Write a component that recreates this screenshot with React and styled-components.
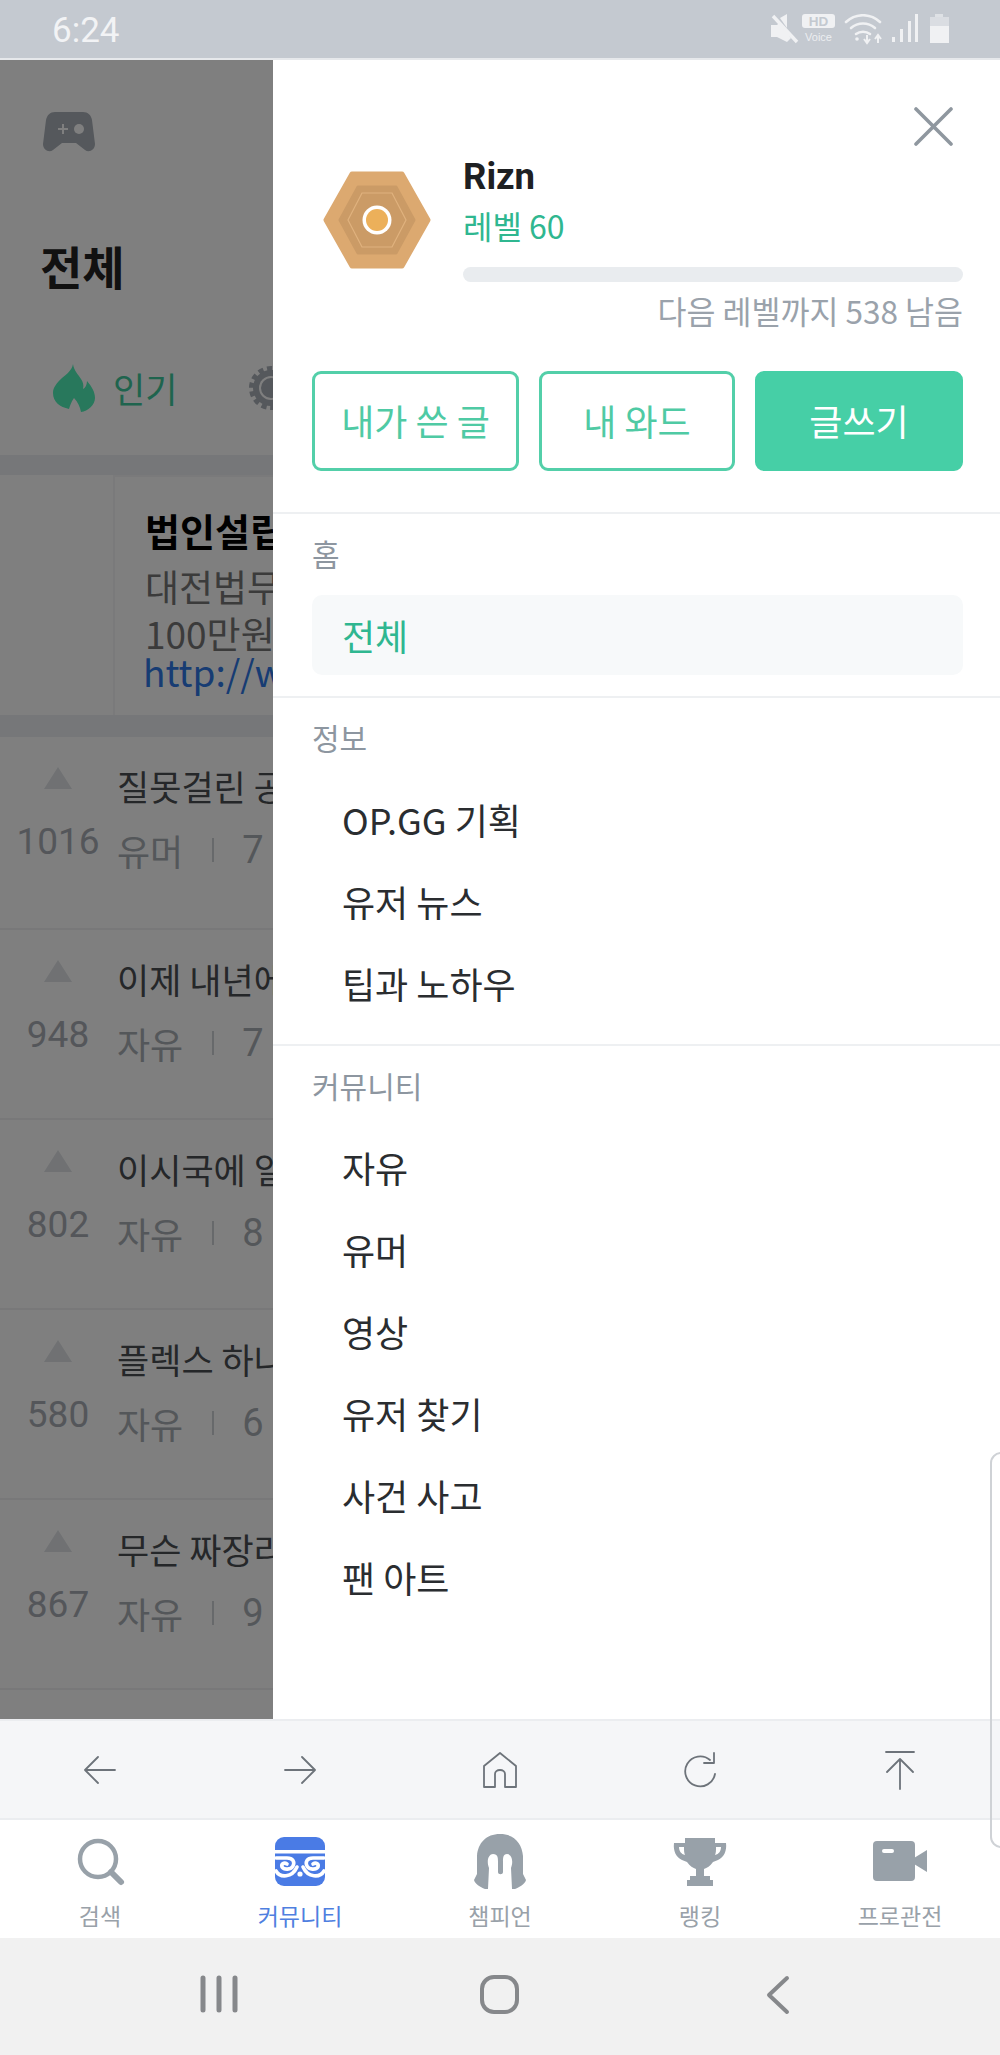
import React from "react";
import styled, { createGlobalStyle } from "styled-components";

const Global = createGlobalStyle`
  html, body { margin: 0; padding: 0; background: #fff; }
  * { box-sizing: border-box; }
  body { font-family: "Noto Sans CJK KR", "Noto Sans", sans-serif; }
`;

const Screen = styled.div`
  position: relative;
  width: 1000px;
  height: 2055px;
  display: flex;
  flex-direction: column;
  overflow: hidden;
`;

const StatusBar = styled.div`
  height: 60px;
  flex: none;
  background: #c4c9d0;
  border-bottom: 2px solid #e6e8eb;
  display: flex;
  align-items: center;
  justify-content: space-between;
  padding: 3px 50px 0 52px;
`;
const Clock = styled.span`
  font-family: Roboto, sans-serif;
  font-size: 35px;
  color: #f2f3f5;
  line-height: 1;
`;
const StatusIcons = styled.svg`
  width: 180px;
  height: 34px;
  display: block;
`;

const Main = styled.div`
  height: 1659px;
  flex: none;
  display: flex;
  overflow: hidden;
`;

const Page = styled.div`
  position: relative;
  width: 273px;
  flex: none;
  overflow: hidden;
  background: #fff;
`;
const Backdrop = styled.div`
  position: absolute;
  inset: 0;
  background: rgba(0, 0, 0, 0.5);
`;
const PageHead = styled.div`
  height: 395px;
  padding: 52px 0 0 43px;
`;
const GameIcon = styled.svg`
  display: block;
  width: 52px;
  height: 40px;
`;
const PageTitle = styled.h1`
  margin: 80px 0 0 -3px;
  font-size: 46px;
  line-height: 66px;
  font-weight: 700;
  color: #222;
`;
const Tabs = styled.div`
  margin: 66px 0 0 10px;
  display: flex;
  align-items: center;
  white-space: nowrap;
`;
const Flame = styled.svg`
  width: 42px;
  height: 48px;
  flex: none;
`;
const TabLabel = styled.span`
  margin-left: 18px;
  font-size: 35px;
  line-height: 48px;
  color: #3ec99c;
`;
const Gear = styled.svg`
  width: 46px;
  height: 46px;
  flex: none;
  margin-left: 71px;
`;
const Band = styled.div`
  height: ${(p) => p.$h}px;
  background: #edeff2;
`;
const Ad = styled.div`
  height: 240px;
  margin-left: 113px;
  padding: 29px 0 0 30px;
  border-left: 2px solid #f4f5f6;
  border-top: 2px solid #f4f5f6;
  white-space: nowrap;
  background: #fff;
`;
const AdTitle = styled.div`
  font-size: 38px;
  line-height: 48px;
  font-weight: 700;
  color: #000;
`;
const AdLine = styled.div`
  font-size: 37px;
  line-height: 47px;
  margin-top: 9px;
  color: #777;
  & + & { margin-top: 0; }
`;
const AdLink = styled.div`
  margin-left: -2px;
  font-size: 37px;
  line-height: 28px;
  color: #2f78e6;
`;
const Row = styled.div`
  height: ${(p) => (p.$first ? 193 : 190)}px;
  display: flex;
  border-bottom: 2px solid #f0f1f3;
`;
const Vote = styled.div`
  width: 117px;
  flex: none;
  display: flex;
  flex-direction: column;
  align-items: center;
  padding: 30px 1px 0 0;
`;
const Tri = styled.div`
  width: 0;
  height: 0;
  border-left: 14px solid transparent;
  border-right: 14px solid transparent;
  border-bottom: 22px solid #e0e3e7;
`;
const Votes = styled.div`
  margin-top: 31px;
  font-family: Roboto, sans-serif;
  font-size: 37px;
  line-height: 44px;
  color: #a8adb4;
`;
const RowBody = styled.div`
  flex: 1;
  min-width: 0;
  padding-top: 27px;
  white-space: nowrap;
`;
const RowTitle = styled.div`
  font-size: 35px;
  line-height: 44px;
  color: #4a4e53;
`;
const Meta = styled.div`
  margin-top: 20px;
  display: flex;
  align-items: center;
  font-size: 36px;
  line-height: 44px;
  color: #a9aeb4;
`;
const MetaSep = styled.span`
  width: 2px;
  height: 24px;
  margin: 0 28px 0 29px;
  background: #cfd2d6;
  flex: none;
`;
const MetaNum = styled.span`
  font-family: Roboto, sans-serif;
  font-size: 38px;
`;

const Drawer = styled.aside`
  position: relative;
  flex: 1;
  min-width: 0;
  background: #fff;
`;
const Close = styled.svg`
  position: absolute;
  top: 47px;
  right: 47px;
  width: 39px;
  height: 39px;
`;
const Profile = styled.div`
  padding: 96px 37px 41px 39px;
  border-bottom: 2px solid #eef0f2;
`;
const ProfileTop = styled.div`
  display: flex;
`;
const Avatar = styled.svg`
  width: 108px;
  height: 98px;
  flex: none;
  margin: 15px 0 0 11px;
`;
const ProfileInfo = styled.div`
  flex: 1;
  margin-left: 32px;
  min-width: 0;
`;
const Name = styled.div`
  font-family: Roboto, sans-serif;
  font-size: 36.5px;
  line-height: 42px;
  font-weight: 700;
  color: #1e2022;
`;
const Level = styled.div`
  margin-top: 7px;
  font-size: 32px;
  line-height: 40px;
  color: #2fb790;
`;
const Bar = styled.div`
  margin-top: 22px;
  height: 15px;
  border-radius: 8px;
  background: #e9ecef;
`;
const NextLevel = styled.div`
  margin-top: 8px;
  text-align: right;
  font-size: 31.5px;
  line-height: 40px;
  color: #9aa2ab;
`;
const Actions = styled.div`
  margin-top: 41px;
  display: grid;
  grid-template-columns: 207px 196px 208px;
  justify-content: space-between;
`;
const Action = styled.div`
  height: 100px;
  border-radius: 9px;
  border: 3px solid #53cfa9;
  display: flex;
  align-items: center;
  justify-content: center;
  padding-bottom: 2px;
  font-size: 36px;
  white-space: nowrap;
  color: ${(p) => (p.$solid ? "#fff" : "#4fcaa4")};
  background: ${(p) => (p.$solid ? "#46cfa6" : "#fff")};
  border-color: ${(p) => (p.$solid ? "#46cfa6" : "#53cfa9")};
`;
const Section = styled.section`
  padding: 19px 37px 21px 39px;
  border-bottom: ${(p) => (p.$last ? "none" : "2px solid #eef0f2")};
`;
const SectionTitle = styled.div`
  font-size: 30px;
  line-height: 40px;
  color: #8d96a0;
`;
const List = styled.div`
  margin-top: 22px;
  display: flex;
  flex-direction: column;
  gap: 2px;
`;
const Item = styled.div`
  height: 80px;
  padding-left: 30px;
  display: flex;
  align-items: center;
  font-size: 36px;
  border-radius: 10px;
  color: ${(p) => (p.$active ? "#2fb790" : "#2a2d30")};
  background: ${(p) => (p.$active ? "#f7f9fa" : "transparent")};
`;

const Toolbar = styled.div`
  height: 101px;
  flex: none;
  display: flex;
  background: #f5f6f8;
  border-top: 2px solid #ebedf0;
  border-bottom: 2px solid #ebedf0;
`;
const ToolCell = styled.div`
  flex: 1;
  display: flex;
  align-items: center;
  justify-content: center;
`;
const ToolIcon = styled.svg`
  width: 44px;
  height: 44px;
  fill: none;
  stroke: #6d737a;
  stroke-width: 1.8;
  stroke-linecap: round;
  stroke-linejoin: round;
`;
const TabBar = styled.div`
  height: 118px;
  flex: none;
  display: flex;
  background: #fff;
`;
const TabCell = styled.div`
  flex: 1;
  display: flex;
  flex-direction: column;
  align-items: center;
  padding-top: 14px;
`;
const TabIconBox = styled.svg`
  width: 60px;
  height: 56px;
  display: block;
`;
const TabText = styled.div`
  margin-top: 9px;
  font-size: 23px;
  line-height: 32px;
  color: ${(p) => (p.$active ? "#4f7fe0" : "#99a1a9")};
`;
const NavBar = styled.div`
  height: 117px;
  flex: none;
  display: grid;
  grid-template-columns: repeat(3, 280px);
  justify-content: center;
  align-items: center;
  background: #f1f1f1;
  padding-bottom: 2px;
`;
const NavCell = styled.div`
  display: flex;
  justify-content: center;
`;
const NavIcon = styled.svg`
  width: 44px;
  height: 44px;
  fill: none;
  stroke: #86888b;
  stroke-width: ${(p) => p.$w || 4};
  stroke-linecap: round;
  stroke-linejoin: round;
`;
const EdgeHandle = styled.div`
  position: absolute;
  right: -12px;
  top: 1452px;
  width: 22px;
  height: 396px;
  border: 2px solid #cfd2d6;
  border-radius: 14px;
`;

const rows = [
  { v: "1016", t: "질못걸린 공", c: "유머", n: "7" },
  { v: "948", t: "이제 내년에", c: "자유", n: "7" },
  { v: "802", t: "이시국에 일", c: "자유", n: "8" },
  { v: "580", t: "플렉스 하나", c: "자유", n: "6" },
  { v: "867", t: "무슨 짜장라", c: "자유", n: "9" },
];
const info = ["OP.GG 기획", "유저 뉴스", "팁과 노하우"];
const community = ["자유", "유머", "영상", "유저 찾기", "사건 사고", "팬 아트"];

const hex = (cx, cy, rx, ry, inset) =>
  `${cx - rx},${cy} ${cx - rx + inset},${cy - ry} ${cx + rx - inset},${cy - ry} ${cx + rx},${cy} ${cx + rx - inset},${cy + ry} ${cx - rx + inset},${cy + ry}`;

export default function App() {
  return (
    <Screen>
      <Global />
      <StatusBar>
        <Clock>6:24</Clock>
        <StatusIcons viewBox="0 0 180 34">
          <g fill="#f0f1f3">
            <path d="M1 11h6l3-3 11 16-4 4-6-3-4-2H1z" />
            <path d="M10 4l7-4v14z" />
            <path d="M3 2l24 26" stroke="#f0f1f3" strokeWidth="3.4" />
            <rect x="32" y="0" width="33" height="14" rx="3" />
          </g>
          <text x="48.5" y="12" fontSize="13.5" fontWeight="700" textAnchor="middle" fill="#c4c9d0" fontFamily="Liberation Sans">HD</text>
          <text x="48.5" y="27" fontSize="11" textAnchor="middle" fill="#eceef0" fontFamily="Liberation Sans">Voice</text>
          <g fill="none" stroke="#f0f1f3" strokeWidth="2.6" strokeLinecap="round">
            <path d="M76 8c10-9 24-9 34 0" />
            <path d="M81 14c7-6 17-6 24 0" />
            <path d="M86 20c4-3 10-3 14 0" />
          </g>
          <circle cx="87" cy="25" r="1.8" fill="#f0f1f3" />
          <path d="M97 21v7m-3-3l3 4 3-4M108 29v-7m-3 3l3-4 3 4" fill="none" stroke="#f0f1f3" strokeWidth="2" />
          <g fill="#f0f1f3">
            <rect x="122" y="23" width="3" height="5" />
            <rect x="130" y="15" width="3" height="13" />
            <rect x="138" y="7" width="3" height="21" />
            <rect x="145" y="0" width="3" height="28" />
            <rect x="165" y="0" width="8" height="3" opacity=".6" />
            <rect x="160" y="3" width="19" height="9" opacity=".5" />
            <rect x="160" y="12" width="19" height="17" />
          </g>
        </StatusIcons>
      </StatusBar>

      <Main>
        <Page>
          <PageHead>
            <GameIcon viewBox="0 0 52 40">
              <path
                d="M12 0h28c5 0 8 3 9 8l3 24c0 6-6 9-10 6l-9-7H19l-9 7c-4 3-10 0-10-6L3 8C4 3 7 0 12 0z"
                fill="#aab0b8"
              />
              <path d="M15 17h10M20 12v10" stroke="#fff" strokeWidth="2" />
              <circle cx="36" cy="17" r="5" fill="#fff" />
            </GameIcon>
            <PageTitle>전체</PageTitle>
            <Tabs>
              <Flame viewBox="0 0 42 48">
                <path
                  d="M20 0c1 7 5 10 8 15 2 3 3 6 2 10 2-1 4-4 4-8 5 6 8 11 8 17 0 7-7 13-14 14-1-5-3-10-7-14-3 4-4 8-5 11C7 43 0 38 0 29c0-6 4-10 9-15 5-4 10-8 11-14z"
                  fill="#50f0b8"
                />
              </Flame>
              <TabLabel>인기</TabLabel>
              <Gear viewBox="0 0 46 46">
                <circle cx="23" cy="23" r="19" fill="none" stroke="#aab0b8" strokeWidth="6" strokeDasharray="5 3.5" />
                <circle cx="23" cy="23" r="18" fill="#aab0b8" />
                <circle cx="23" cy="23" r="12" fill="#fff" />
                <circle cx="23" cy="23" r="10" fill="#aab0b8" />
              </Gear>
            </Tabs>
          </PageHead>
          <Band $h={20} />
          <Ad>
            <AdTitle>법인설립</AdTitle>
            <AdLine>대전법무</AdLine>
            <AdLine>100만원</AdLine>
            <AdLink>http://www</AdLink>
          </Ad>
          <Band $h={22} />
          {rows.map((r, i) => (
            <Row key={r.v} $first={i === 0}>
              <Vote>
                <Tri />
                <Votes>{r.v}</Votes>
              </Vote>
              <RowBody>
                <RowTitle>{r.t}</RowTitle>
                <Meta>
                  {r.c}
                  <MetaSep />
                  <MetaNum>{r.n}</MetaNum>
                </Meta>
              </RowBody>
            </Row>
          ))}
          <Backdrop />
        </Page>

        <Drawer>
          <Close viewBox="0 0 39 39">
            <path d="M2 2l35 35M37 2L2 37" stroke="#8f979f" strokeWidth="3.6" strokeLinecap="round" />
          </Close>
          <Profile>
            <ProfileTop>
              <Avatar viewBox="0 0 108 98">
                <polygon points={hex(54, 49, 51, 46, 26)} fill="#dca970" stroke="#dca970" strokeWidth="5" strokeLinejoin="round" />
                <polygon points={hex(54, 49, 37, 33, 18)} fill="#cb9b66" stroke="#cb9b66" strokeWidth="3" strokeLinejoin="round" />
                <polygon points={hex(54, 49, 29, 27, 14)} fill="none" stroke="#e0b27e" strokeWidth="1.2" />
                <circle cx="54" cy="49" r="14.5" fill="#fff" />
                <circle cx="54" cy="49" r="11" fill="#ecb05a" />
              </Avatar>
              <ProfileInfo>
                <Name>Rizn</Name>
                <Level>레벨 60</Level>
                <Bar />
                <NextLevel>다음 레벨까지 538 남음</NextLevel>
              </ProfileInfo>
            </ProfileTop>
            <Actions>
              <Action>내가 쓴 글</Action>
              <Action>내 와드</Action>
              <Action $solid>글쓰기</Action>
            </Actions>
          </Profile>
          <Section>
            <SectionTitle>홈</SectionTitle>
            <List>
              <Item $active>전체</Item>
            </List>
          </Section>
          <Section>
            <SectionTitle>정보</SectionTitle>
            <List>
              {info.map((t) => (
                <Item key={t}>{t}</Item>
              ))}
            </List>
          </Section>
          <Section $last>
            <SectionTitle>커뮤니티</SectionTitle>
            <List>
              {community.map((t) => (
                <Item key={t}>{t}</Item>
              ))}
            </List>
          </Section>
        </Drawer>
      </Main>

      <Toolbar>
        <ToolCell>
          <ToolIcon viewBox="0 0 44 44"><path d="M37 22H8M20 9L7 22l13 13" /></ToolIcon>
        </ToolCell>
        <ToolCell>
          <ToolIcon viewBox="0 0 44 44"><path d="M7 22h29M24 9l13 13-13 13" /></ToolIcon>
        </ToolCell>
        <ToolCell>
          <ToolIcon viewBox="0 0 44 44"><path d="M6 18L22 5l16 13v21H27V26c0-2-2-4-5-4s-5 2-5 4v13H6z" /></ToolIcon>
        </ToolCell>
        <ToolCell>
          <ToolIcon viewBox="0 0 44 44"><path d="M32 12a15 15 0 1 0 5 14M36 5v10H26" /></ToolIcon>
        </ToolCell>
        <ToolCell>
          <ToolIcon viewBox="0 0 44 44"><path d="M8 4h28M22 41V11M9 24l13-13 13 13" /></ToolIcon>
        </ToolCell>
      </Toolbar>

      <TabBar>
        <TabCell>
          <TabIconBox viewBox="0 0 60 56">
            <circle cx="28" cy="25" r="18" fill="none" stroke="#98a1a9" strokeWidth="4.5" />
            <path d="M41 38l10 10" stroke="#98a1a9" strokeWidth="6" strokeLinecap="round" />
          </TabIconBox>
          <TabText>검색</TabText>
        </TabCell>
        <TabCell>
          <TabIconBox viewBox="0 0 60 56">
            <rect x="5" y="3" width="50" height="49" rx="9" fill="#4a7be5" />
            <path d="M5 16h50v3.5H5z" fill="#fff" />
            <g fill="none" stroke="#fff" strokeWidth="3.6" strokeLinecap="round">
              <path d="M6 24H17C23 24 25 28 23 32 21 36 14 36 12 33 11 30 14 28 17 30" />
              <path d="M6 37C10 44 22 44 27 33" />
              <path d="M54 24H43C37 24 35 28 37 32 39 36 46 36 48 33 49 30 46 28 43 30" />
              <path d="M54 37C50 44 38 44 33 33" />
            </g>
            <circle cx="30" cy="40" r="2.6" fill="#fff" />
          </TabIconBox>
          <TabText $active>커뮤니티</TabText>
        </TabCell>
        <TabCell>
          <TabIconBox viewBox="0 0 60 56">
            <path
              d="M30 0C44 0 52 9 53 22L53 40 56 46C55 50 50 53 45 55L42 55 41 34C44 26 41 20 37 20 33 20 33 24 33 28L33 38C33 41 28 41 28 38L28 28C28 24 28 20 23 20 19 20 16 26 19 34L18 55 15 55C10 53 5 50 4 46L7 40 7 22C8 9 16 0 30 0Z"
              fill="#98a1a9"
            />
          </TabIconBox>
          <TabText>챔피언</TabText>
        </TabCell>
        <TabCell>
          <TabIconBox viewBox="0 0 60 56">
            <path
              d="M15 4h30v5h11c1 8-2 14-8 17l-5 2c-3 4-6 6-9 7v7h6v4h3v6H17v-6h3v-4h6v-7c-3-1-6-3-9-7l-5-2C6 23 3 17 4 9h11z"
              fill="#98a1a9"
            />
            <path d="M9 13h5c0 3 0 6 1 8-4-1-6-4-6-8zM51 13h-5c0 3 0 6-1 8 4-1 6-4 6-8z" fill="#fff" />
          </TabIconBox>
          <TabText>랭킹</TabText>
        </TabCell>
        <TabCell>
          <TabIconBox viewBox="0 0 60 56">
            <rect x="3" y="7" width="42" height="40" rx="4" fill="#98a1a9" />
            <path d="M44 24l13-8v22l-13-8z" fill="#98a1a9" />
            <rect x="12" y="15" width="12" height="4" rx="2" fill="#fff" />
          </TabIconBox>
          <TabText>프로관전</TabText>
        </TabCell>
      </TabBar>

      <NavBar>
        <NavCell>
          <NavIcon viewBox="0 0 44 44" $w={5}><path d="M5 4v32M21 4v32M37 4v32" /></NavIcon>
        </NavCell>
        <NavCell>
          <NavIcon viewBox="0 0 44 44"><rect x="4" y="3" width="35" height="35" rx="12" /></NavIcon>
        </NavCell>
        <NavCell>
          <NavIcon viewBox="0 0 44 44"><path d="M29 4L11 21l18 17" /></NavIcon>
        </NavCell>
      </NavBar>
      <EdgeHandle />
    </Screen>
  );
}
